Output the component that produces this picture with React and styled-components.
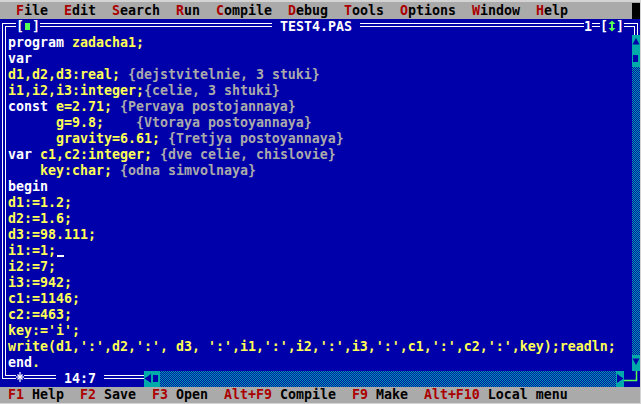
import React from "react";
import styled, { createGlobalStyle, css } from "styled-components";

// палитра VGA, как в Turbo Pascal
const C = {
  blue: "#0000AA",
  cyan: "#00AAAA",
  gray: "#AAAAAA",
  yellow: "#FFFF55",
  white: "#FFFFFF",
  red: "#AA0000",
  green: "#55FF55",
  black: "#000000",
};

const GlobalStyle = createGlobalStyle`
  html, body {
    margin: 0;
    padding: 0;
    background: #d4d4d4;
  }
`;

const Screen = styled.div`
  width: 641px;
  height: 404px;
  box-sizing: border-box;
  padding: 2px 1px 1px 0;
  background: #d4d4d4;
  display: flex;
  flex-direction: column;
  font-family: "DejaVu Sans Mono", "Liberation Mono", monospace;
  font-size: 13.29px;
  font-weight: bold;
  line-height: 16px;
  white-space: pre;
  overflow: hidden;
`;

//Верхнее меню
const MenuBar = styled.div`
  height: 16px;
  padding: 1px 0 0 16px;
  display: flex;
  gap: 16px;
  background: ${C.gray};
  color: ${C.black};
`;

const Hot = styled.span`
  color: ${C.red};
`;

const MenuEnd = styled.span`
  margin-left: auto;
  width: 8px;
  background: ${C.black};
`;

//Окно редактора
const Window = styled.div`
  height: 368px;
  display: flex;
  flex-direction: column;
  background: ${C.blue};
`;

const FrameRow = styled.div`
  height: 16px;
  flex: none;
  display: flex;
  color: ${C.white};
`;

const Rule = styled.span`
  flex: none;
  width: ${(p) => p.$cols * 8}px;
  height: 4px;
  margin-top: 4px;
  box-sizing: border-box;
  border-top: 1px solid ${C.white};
  border-bottom: 1px solid ${C.white};
`;

const Cell = styled.span`
  flex: none;
  width: ${(p) => (p.$cols || 1) * 8}px;
  height: 16px;
  color: ${(p) => p.$color || C.white};

  svg {
    display: block;
  }
`;

const cornerStyles = {
  topLeft: css`
    &::before { left: 2px; right: 0; top: 4px; bottom: 0; border-left-width: 1px; border-top-width: 1px; }
    &::after { left: 5px; right: 0; top: 7px; bottom: 0; border-left-width: 1px; border-top-width: 1px; }
  `,
  topRight: css`
    &::before { left: 0; right: 2px; top: 4px; bottom: 0; border-right-width: 1px; border-top-width: 1px; }
    &::after { left: 0; right: 5px; top: 7px; bottom: 0; border-right-width: 1px; border-top-width: 1px; }
  `,
  bottomLeft: css`
    &::before { left: 2px; right: 0; top: 0; height: 8px; border-left-width: 1px; border-bottom-width: 1px; }
    &::after { left: 5px; right: 0; top: 0; height: 5px; border-left-width: 1px; border-bottom-width: 1px; }
  `,
};

const Corner = styled.span`
  flex: none;
  width: 8px;
  height: 16px;
  position: relative;

  &::before,
  &::after {
    content: "";
    position: absolute;
    box-sizing: border-box;
    border: 0 solid ${C.white};
  }

  ${(p) => cornerStyles[p.$at]}
`;

const Body = styled.div`
  flex: 1;
  min-height: 0;
  display: flex;
`;

const SideRail = styled.div`
  flex: none;
  width: 8px;
  background: linear-gradient(
    to right,
    transparent 2px,
    ${C.white} 2px 3px,
    transparent 3px 5px,
    ${C.white} 5px 6px,
    transparent 6px
  );
`;

const Code = styled.div`
  width: 624px;
  flex: none;
  display: flex;
  flex-direction: column;
`;

const CodeLine = styled.div`
  height: 16px;
  color: ${C.yellow};
`;

const Token = styled.span`
  color: ${(p) => p.$color};
`;

const Cursor = styled.span`
  display: inline-block;
  width: 7px;
  height: 2px;
  margin-left: 1px;
  vertical-align: -2px;
  background: ${C.white};
`;

const checker = css`
  background-color: ${C.blue};
  background-image: repeating-conic-gradient(${C.cyan} 0 25%, ${C.blue} 0 50%);
  background-size: 2px 2px;
`;

const VScroll = styled.div`
  width: 8px;
  flex: none;
  display: flex;
  flex-direction: column;
`;

const HScroll = styled.div`
  flex: 1;
  display: flex;
`;

const ScrollButton = styled.span`
  flex: none;
  width: 8px;
  height: 16px;
  background: ${C.cyan};

  svg {
    display: block;
  }
`;

const Track = styled.span`
  flex: 1;
  ${checker}
`;

//Строка подсказок
const StatusBar = styled.div`
  height: 16px;
  padding-left: 8px;
  display: flex;
  gap: 16px;
  background: ${C.gray};
  color: ${C.black};
`;

const Key = styled.span`
  color: ${C.red};
`;

const MENU = ["File", "Edit", "Search", "Run", "Compile", "Debug", "Tools", "Options", "Window", "Help"];

const HINTS = [
  ["F1", "Help"],
  ["F2", "Save"],
  ["F3", "Open"],
  ["Alt+F9", "Compile"],
  ["F9", "Make"],
  ["Alt+F10", "Local menu"],
];

const SOURCE = [
  "program zadacha1;",
  "var",
  "d1,d2,d3:real; {dejstvitelnie, 3 stuki}",
  "i1,i2,i3:integer;{celie, 3 shtuki}",
  "const e=2.71; {Pervaya postojannaya}",
  "      g=9.8;    {Vtoraya postoyannaya}",
  "      gravity=6.61; {Tretjya postoyannaya}",
  "var c1,c2:integer; {dve celie, chislovie}",
  "    key:char; {odna simvolnaya}",
  "begin",
  "d1:=1.2;",
  "d2:=1.6;",
  "d3:=98.111;",
  "i1:=1;",
  "i2:=7;",
  "i3:=942;",
  "c1:=1146;",
  "c2:=463;",
  "key:='i';",
  "write(d1,':',d2,':', d3, ':',i1,':',i2,':',i3,':',c1,':',c2,':',key);readln;",
  "end.",
];

const CURSOR_LINE = 13;

const KEYWORDS = ["program", "var", "const", "begin", "end"];

// разбивает строку на слова: ключевые, комментарии и всё остальное
const tokenize = (line) =>
  line
    .split(/(\{[^}]*\}|\b(?:program|var|const|begin|end)\b)/)
    .filter(Boolean)
    .map((text) => {
      if (text.startsWith("{")) return { text, color: C.gray };
      if (KEYWORDS.includes(text)) return { text, color: C.white };
      return { text, color: C.yellow };
    });

const BoxGlyph = ({ color }) => (
  <svg width="8" height="16" viewBox="0 0 8 16">
    <rect x="1" y="4" width="5" height="7" fill={color} />
  </svg>
);

const UpDownGlyph = () => (
  <svg width="8" height="16" viewBox="0 0 8 16">
    <polygon points="4,1.5 7.5,5 0.5,5" fill={C.green} />
    <rect x="3" y="5" width="2" height="4" fill={C.green} />
    <polygon points="0.5,9 7.5,9 4,12.5" fill={C.green} />
  </svg>
);

const StarGlyph = () => (
  <svg width="8" height="16" viewBox="0 0 8 16" stroke={C.white} strokeWidth="1.2">
    <line x1="4" y1="1" x2="4" y2="11" />
    <line x1="0" y1="6" x2="8" y2="6" />
    <line x1="1.5" y1="3.5" x2="6.5" y2="8.5" />
    <line x1="6.5" y1="3.5" x2="1.5" y2="8.5" />
  </svg>
);

const Arrow = ({ points }) => (
  <svg width="8" height="16" viewBox="0 0 8 16">
    <polygon points={points} fill={C.blue} />
  </svg>
);

const ResizeGrip = () => (
  <svg width="16" height="16" viewBox="0 0 16 16" fill="none" stroke={C.green} strokeWidth="1.5">
    <polyline points="0,9.5 12.5,9.5 12.5,0" />
  </svg>
);

const App = () => {
  return (
    <>
      <GlobalStyle />
      <Screen>
        <MenuBar>
          {MENU.map((item) => (
            <span key={item}>
              <Hot>{item[0]}</Hot>
              {item.slice(1)}
            </span>
          ))}
          <MenuEnd />
        </MenuBar>

        <Window>
          <FrameRow>
            <Corner $at="topLeft" />
            <Rule $cols={1} />
            <Cell>[</Cell>
            <Cell>
              <BoxGlyph color={C.green} />
            </Cell>
            <Cell>]</Cell>
            <Rule $cols={29} />
            <Cell $cols={11}> TEST4.PAS </Cell>
            <Rule $cols={28} />
            <Cell>1</Cell>
            <Rule $cols={1} />
            <Cell>[</Cell>
            <Cell>
              <UpDownGlyph />
            </Cell>
            <Cell>]</Cell>
            <Rule $cols={1} />
            <Corner $at="topRight" />
          </FrameRow>

          <Body>
            <SideRail />
            <Code>
              {SOURCE.map((line, i) => (
                <CodeLine key={i}>
                  {tokenize(line).map((t, j) => (
                    <Token key={j} $color={t.color}>
                      {t.text}
                    </Token>
                  ))}
                  {i === CURSOR_LINE && <Cursor />}
                </CodeLine>
              ))}
            </Code>
            <VScroll>
              <ScrollButton>
                <Arrow points="4,3 7.5,9.5 0.5,9.5" />
              </ScrollButton>
              <ScrollButton>
                <BoxGlyph color={C.blue} />
              </ScrollButton>
              <Track />
              <ScrollButton>
                <Arrow points="0.5,3.5 7.5,3.5 4,10" />
              </ScrollButton>
            </VScroll>
          </Body>

          <FrameRow>
            <Corner $at="bottomLeft" />
            <Rule $cols={1} />
            <Cell>
              <StarGlyph />
            </Cell>
            <Rule $cols={4} />
            <Cell $cols={6}> 14:7 </Cell>
            <Rule $cols={5} />
            <HScroll>
              <ScrollButton>
                <Arrow points="0.5,7.5 7,3 7,12" />
              </ScrollButton>
              <ScrollButton>
                <BoxGlyph color={C.blue} />
              </ScrollButton>
              <Track />
              <ScrollButton>
                <Arrow points="1,3 7.5,7.5 1,12" />
              </ScrollButton>
            </HScroll>
            <Cell $cols={2}>
              <ResizeGrip />
            </Cell>
          </FrameRow>
        </Window>

        <StatusBar>
          {HINTS.map(([k, label]) => (
            <span key={k}>
              <Key>{k}</Key>
              {" " + label}
            </span>
          ))}
        </StatusBar>
      </Screen>
    </>
  );
};

export default App;
